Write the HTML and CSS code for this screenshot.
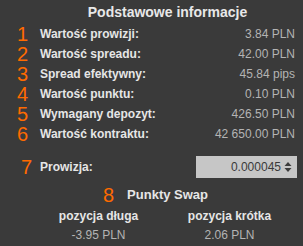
FILE: index.html
```html
<!DOCTYPE html>
<html lang="pl">
<head>
  <meta charset="UTF-8">
  <title>Podstawowe informacje</title>
  <link rel="stylesheet" href="styles.css">
</head>
<body>
  <div class="panel">
    <h2 class="title">Podstawowe informacje</h2>

    <div class="info">
      <div class="row"><span class="num">1</span><span class="label">Wartość prowizji:</span><span class="value">3.84 PLN</span></div>
      <div class="row"><span class="num">2</span><span class="label">Wartość spreadu:</span><span class="value">42.00 PLN</span></div>
      <div class="row"><span class="num">3</span><span class="label">Spread efektywny:</span><span class="value">45.84 pips</span></div>
      <div class="row"><span class="num">4</span><span class="label">Wartość punktu:</span><span class="value">0.10 PLN</span></div>
      <div class="row"><span class="num">5</span><span class="label">Wymagany depozyt:</span><span class="value">426.50 PLN</span></div>
      <div class="row"><span class="num">6</span><span class="label">Wartość kontraktu:</span><span class="value">42 650.00 PLN</span></div>
    </div>

    <div class="row fee">
      <span class="num">7</span>
      <label class="label" for="feeInput">Prowizja:</label>
      <div class="spin">
        <input type="text" id="feeInput" value="0.000045">
        <span class="arrows">
          <svg width="8" height="12" viewBox="0 0 8 12"><path d="M4 1 L7.5 5 L0.5 5 Z" fill="#3c3c3c"/><path d="M0.5 7 L7.5 7 L4 11 Z" fill="#3c3c3c"/></svg>
        </span>
      </div>
    </div>

    <div class="swap-head"><span class="num">8</span><span>Punkty Swap</span></div>
    <div class="swap">
      <div class="col">
        <div class="col-title">pozycja długa</div>
        <div class="col-value">-3.95 PLN</div>
      </div>
      <div class="col">
        <div class="col-title">pozycja krótka</div>
        <div class="col-value">2.06 PLN</div>
      </div>
    </div>
  </div>
</body>
</html>
```

FILE: styles.css
```css
body {
  margin: 0;
  background-color: #3a3a3a;
  font-family: "Liberation Sans", Arial, sans-serif;
  color: #e6e6e6;
}
.panel { padding: 3px 8px 0 0; }
.title {
  margin: 0 0 0 40px; font-size: 14px; font-weight: bold; text-align: center;
  line-height: 18px; color: #e8e8e8;
}
.row {
  display: flex; align-items: center; height: 20px;
}
.info { margin-top: 3px; }
.num {
  width: 40px; padding-right: 12px; box-sizing: border-box; text-align: right;
  color: #ff6a00; font-size: 20px; line-height: 20px;
}
.label { font-weight: bold; font-size: 12px; color: #e6e6e6; }
.value { margin-left: auto; font-size: 12px; color: #b4b4b4; }
.fee { margin-top: 12px; height: 22px; }
.fee .num { padding-right: 8px; }
.spin {
  margin-left: auto; margin-right: -2px; width: 101px; height: 22px;
  background-color: #c6c6c6; display: flex; align-items: center;
}
.spin input {
  flex: 1; min-width: 0; border: none; background: transparent; outline: none;
  text-align: right; font-family: inherit; font-size: 12px; color: #3a3a3a; padding: 0 2px 0 0;
}
.arrows { display: flex; padding: 0 5px 0 1px; }
.swap-head {
  display: flex; align-items: center; justify-content: center;
  margin: 7px 0 0 40px; font-size: 13px; font-weight: bold; line-height: 20px;
}
.swap-head .num {
  width: auto; padding: 0; margin-left: -24px; margin-right: 13px; font-weight: normal;
}
.swap { display: flex; margin-left: 33px; margin-top: 1px; }
.col { flex: 1; text-align: center; }
.col-title { font-weight: bold; font-size: 12px; line-height: 20px; }
.col-value { font-size: 12px; color: #b4b4b4; line-height: 18px; }
```
